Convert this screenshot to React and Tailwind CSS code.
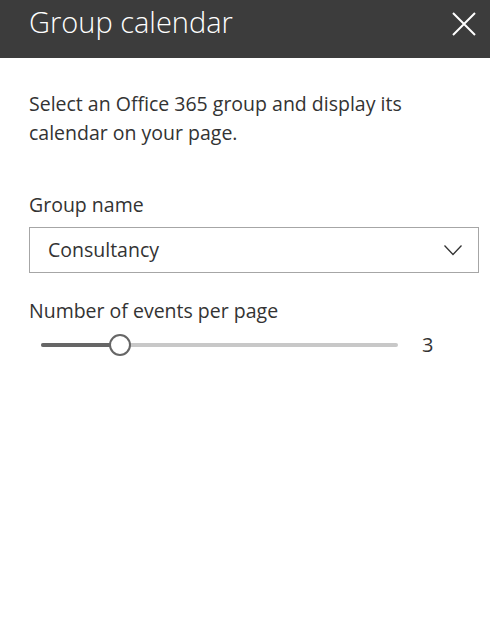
import React from "react";

export default function App() {
  const font = { fontFamily: '"Open Sans", "Noto Sans", sans-serif' };
  return (
    <div className="w-[490px] h-[629px] bg-white" style={font}>
      <div className="h-[58px] bg-[#3c3c3c] flex items-start justify-between pl-[29px] pr-[14px]">
        <h1 className="pt-[7px] text-[29px] font-light text-white leading-[29px]">Group calendar</h1>
        <button className="mt-[12px] w-[24px] h-[24px] flex items-center justify-center">
          <svg width="24" height="24" viewBox="0 0 24 24">
            <path d="M1 1 L23 23 M23 1 L1 23" stroke="white" strokeWidth="2" fill="none" />
          </svg>
        </button>
      </div>
      <div className="pl-[29px] pr-[11px]">
        <p className="mt-[31px] pr-[18px] text-[19.5px] leading-[29px] text-[#333333]">
          Select an Office 365 group and display its calendar on your page.
        </p>
        <div className="mt-[46px] text-[19.5px] leading-[24px] text-[#333333]">Group name</div>
        <div className="mt-[10px] h-[46px] border border-[#a6a6a6] flex items-center justify-between pl-[18px] pr-[16px]">
          <span className="text-[19.5px] leading-[24px] text-[#333333]">Consultancy</span>
          <svg width="18" height="11" viewBox="0 0 18 11">
            <path d="M0.5 0.5 L9 9.5 L17.5 0.5" stroke="#333333" strokeWidth="1.3" fill="none" />
          </svg>
        </div>
        <div className="mt-[26px] text-[19.5px] leading-[24px] text-[#333333]">Number of events per page</div>
        <div className="mt-[10px] flex items-center h-[24px]">
          <div className="relative ml-[12px] w-[357px] h-[4px] rounded-full bg-[#c8c8c8]">
            <div className="absolute left-0 top-0 h-[4px] w-[79px] rounded-full bg-[#666666]" />
            <div className="absolute left-[68px] top-[-9px] w-[22px] h-[22px] rounded-full border-2 border-[#666666] bg-white" />
          </div>
          <span className="ml-[24px] text-[20px] leading-[24px] text-[#333333]">3</span>
        </div>
      </div>
    </div>
  );
}
